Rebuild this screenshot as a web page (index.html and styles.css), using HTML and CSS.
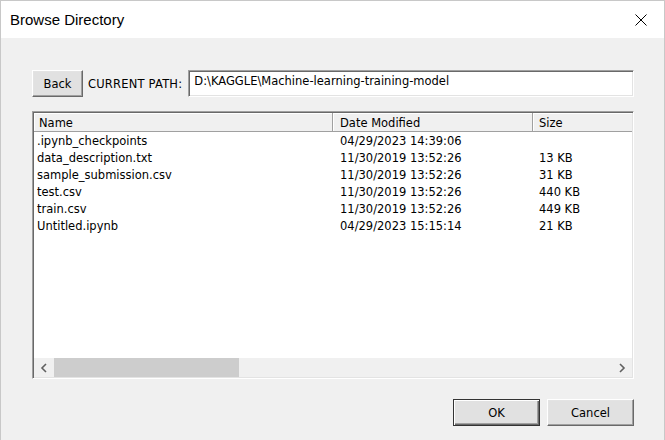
FILE: index.html
```html
<!DOCTYPE html>
<html>
<head>
<meta charset="utf-8">
<link rel="stylesheet" href="styles.css">
</head>
<body>
<div class="window">
  <div class="titlebar">
    <span class="title">Browse Directory</span>
    <span class="close">
      <svg width="12" height="12" viewBox="0 0 12 12"><path d="M0.5 0.5 L11.5 11.5 M11.5 0.5 L0.5 11.5" stroke="#000" stroke-width="1" fill="none"/></svg>
    </span>
  </div>
  <div class="content">
    <div class="pathrow">
      <button class="btn back">Back</button>
      <span class="label">CURRENT PATH:</span>
      <div class="pathbox">D:\KAGGLE\Machine-learning-training-model</div>
    </div>
    <div class="list">
      <div class="header">
        <div class="hcell c-name">Name</div>
        <div class="hcell c-date">Date Modified</div>
        <div class="hcell c-size">Size</div>
      </div>
      <div class="rows">
        <div class="row"><span class="c-name">.ipynb_checkpoints</span><span class="c-date">04/29/2023 14:39:06</span><span class="c-size"></span></div>
        <div class="row"><span class="c-name">data_description.txt</span><span class="c-date">11/30/2019 13:52:26</span><span class="c-size">13 KB</span></div>
        <div class="row"><span class="c-name">sample_submission.csv</span><span class="c-date">11/30/2019 13:52:26</span><span class="c-size">31 KB</span></div>
        <div class="row"><span class="c-name">test.csv</span><span class="c-date">11/30/2019 13:52:26</span><span class="c-size">440 KB</span></div>
        <div class="row"><span class="c-name">train.csv</span><span class="c-date">11/30/2019 13:52:26</span><span class="c-size">449 KB</span></div>
        <div class="row"><span class="c-name">Untitled.ipynb</span><span class="c-date">04/29/2023 15:15:14</span><span class="c-size">21 KB</span></div>
      </div>
      <div class="hscroll">
        <span class="arrow">
          <svg width="8" height="10" viewBox="0 0 8 10"><path d="M6 1 L2 5 L6 9" stroke="#606060" stroke-width="1.6" fill="none"/></svg>
        </span>
        <span class="thumb"></span>
        <span class="track"></span>
        <span class="arrow">
          <svg width="8" height="10" viewBox="0 0 8 10"><path d="M2 1 L6 5 L2 9" stroke="#606060" stroke-width="1.6" fill="none"/></svg>
        </span>
      </div>
    </div>
    <div class="actions">
      <button class="btn dlg default">OK</button>
      <button class="btn dlg">Cancel</button>
    </div>
  </div>
</div>
</body>
</html>
```

FILE: styles.css
```css
html, body {
  margin: 0;
  padding: 0;
  background: #f0f0f0;
}

.window {
  width: 665px;
  height: 440px;
  box-sizing: border-box;
  border: 1px solid #c8c8c8;
  border-bottom: none;
  display: flex;
  flex-direction: column;
  background: #f0f0f0;
  font-family: "DejaVu Sans", sans-serif;
  font-size: 11.5px;
  color: #000;
}

.titlebar {
  height: 37px;
  flex: none;
  background: #fff;
  display: flex;
  align-items: center;
  justify-content: space-between;
  padding-left: 9px;
}

.title {
  font-family: "Liberation Sans", Arial, sans-serif;
  font-size: 15px;
  color: #000;
}

.close {
  width: 46px;
  height: 37px;
  display: flex;
  align-items: center;
  justify-content: center;
}

.content {
  flex: 1;
  display: flex;
  flex-direction: column;
  padding: 32px 30px 0 31px;
}

.pathrow {
  display: flex;
  align-items: center;
  height: 27px;
}

.btn {
  font-family: "DejaVu Sans", sans-serif;
  font-size: 11.5px;
  color: #000;
  background: #e1e1e1;
  box-sizing: border-box;
  border: 1px solid;
  border-color: #fff #696969 #696969 #fff;
  box-shadow: inset -1px -1px 0 #a0a0a0, inset 1px 1px 0 #e3e3e3;
  padding: 0;
  margin: 0;
}

.back {
  width: 51px;
  height: 27px;
}

.label {
  margin-left: 5px;
  margin-right: 6px;
  letter-spacing: 0.2px;
  white-space: nowrap;
}

.pathbox {
  flex: 1;
  height: 27px;
  box-sizing: border-box;
  background: #fff;
  border: 1px solid;
  border-color: #a0a0a0 #fff #fff #a0a0a0;
  box-shadow: inset 1px 1px 0 #696969, inset -1px -1px 0 #e3e3e3;
  padding: 3px 0 0 5px;
  white-space: nowrap;
}

.list {
  margin-top: 14px;
  height: 268px;
  box-sizing: border-box;
  background: #fff;
  border: 1px solid;
  border-color: #a0a0a0 #fff #fff #a0a0a0;
  box-shadow: inset 1px 1px 0 #696969, inset -1px -1px 0 #e3e3e3;
  padding: 1px;
  display: flex;
  flex-direction: column;
}

.header {
  display: grid;
  grid-template-columns: 299px 200px 1fr;
  height: 19px;
  flex: none;
}

.hcell {
  background: #f0f0f0;
  box-sizing: border-box;
  border-right: 1px solid #a0a0a0;
  border-bottom: 1px solid #a0a0a0;
  box-shadow: inset 1px 1px 0 #fff;
  display: flex;
  align-items: center;
  padding-top: 1px;
  white-space: nowrap;
}

.hcell.c-name { padding-left: 5px; }
.hcell.c-date { padding-left: 7px; }
.hcell.c-size { padding-left: 6px; border-right: none; }

.rows {
  flex: 1;
}

.row {
  display: grid;
  grid-template-columns: 299px 200px 1fr;
  height: 17px;
  align-items: center;
  white-space: nowrap;
}

.row .c-name { padding-left: 3px; }
.row .c-date { padding-left: 7px; }
.row .c-size { padding-left: 6px; }

.hscroll {
  height: 19px;
  flex: none;
  display: flex;
  background: #f0f0f0;
}

.arrow {
  width: 20px;
  display: flex;
  align-items: center;
  justify-content: center;
}

.thumb {
  width: 185px;
  background: #cdcdcd;
}

.track {
  flex: 1;
}

.actions {
  margin-top: 20px;
  display: flex;
  justify-content: flex-end;
  gap: 7px;
}

.dlg {
  width: 87px;
  height: 27px;
}

.default {
  border: 1px solid #333;
  box-shadow: inset 1px 1px 0 #fff, inset -1px -1px 0 #696969, inset -2px -2px 0 #a0a0a0;
}
```
